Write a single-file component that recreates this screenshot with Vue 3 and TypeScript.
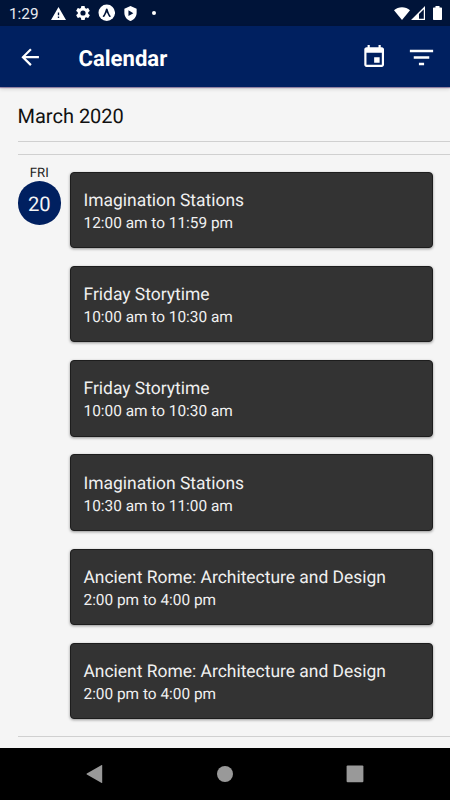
<script setup lang="ts">
interface CalendarEvent {
  title: string
  time: string
}

const events: CalendarEvent[] = [
  { title: 'Imagination Stations', time: '12:00 am to 11:59 pm' },
  { title: 'Friday Storytime', time: '10:00 am to 10:30 am' },
  { title: 'Friday Storytime', time: '10:00 am to 10:30 am' },
  { title: 'Imagination Stations', time: '10:30 am to 11:00 am' },
  { title: 'Ancient Rome: Architecture and Design', time: '2:00 pm to 4:00 pm' },
  { title: 'Ancient Rome: Architecture and Design', time: '2:00 pm to 4:00 pm' },
]
</script>

<template>
  <div class="screen">
    <div class="status">
      <span class="clock">1:29</span>
      <svg class="warn" viewBox="1 2 22 19"><path d="M1 21h22L12 2 1 21zm12-3h-2v-2h2v2zm0-4h-2v-4h2v4z" /></svg>
      <svg class="gear" viewBox="2 2 20 20"><path fill-rule="evenodd" d="M19.4 13a7.5 7.5 0 0 0 0-2l2.1-1.7c.2-.1.3-.4.1-.6l-2-3.5c-.1-.2-.4-.3-.6-.2l-2.5 1a7.300 7.300 0 0 0-1.700-1l-.4-2.600A.5.5 0 0 0 14 2h-4a.5.5 0 0 0-.5.4L9.100 5a7.700 7.700 0 0 0-1.700 1l-2.500-1c-.2-.1-.5 0-.6.2l-2 3.500c-.1.200-.1.500.1.600L4.600 11a7.500 7.500 0 0 0 0 2l-2.200 1.700c-.2.100-.2.400-.1.600l2 3.500c.1.200.4.300.6.200l2.500-1c.5.400 1.100.7 1.700 1l.4 2.600c0 .2.200.4.500.4h4c.3 0 .5-.2.500-.4l.4-2.600c.6-.3 1.200-.6 1.700-1l2.500 1c.2.100.5 0 .6-.2l2-3.500c.1-.2.100-.5-.1-.6zM12 15.700a3.700 3.700 0 1 1 0-7.400 3.700 3.700 0 0 1 0 7.400z" /></svg>
      <svg class="expo" viewBox="0 0 18 18">
        <circle cx="9" cy="9" r="8.500" />
        <path class="cut" d="M4.700 12.700C6.300 10.800 7.200 8.200 8 5.600c.2-.8.500-1.100 1-1.100s.8.300 1 1.100c.8 2.600 1.700 5.200 3.300 7.100-.8.900-1.800.7-2.300-.3L9 8.500l-2 3.900c-.5 1-1.500 1.200-2.300.3z" />
      </svg>
      <svg class="shield" viewBox="3 1 18 22"><path fill-rule="evenodd" d="M12 1 3 5v6c0 5.550 3.840 10.740 9 12 5.160-1.260 9-6.450 9-12V5zM9 7.200v8.600l7.200-4.300z" /></svg>
      <i class="dot"></i>
      <span class="grow"></span>
      <svg class="wifi" viewBox="0 0 16 13"><path d="M8 13 0 3.200C2.200 1.300 5 .2 8 .2s5.800 1.100 8 3z" /></svg>
      <svg class="signal" viewBox="0 0 14 14"><path fill-rule="evenodd" d="M14 0v14H0zM12.800 3.200 8 8v4.700h4.800z" /></svg>
      <svg class="battery" viewBox="0 0 9 14"><path d="M2.500 0h4v1.500H8c.6 0 1 .4 1 1V13c0 .6-.4 1-1 1H1c-.6 0-1-.4-1-1V2.500c0-.6.4-1 1-1h1.500z" /></svg>
    </div>

    <header class="appbar">
      <svg class="back" viewBox="0 0 24 24"><path d="M20 11H7.830l5.590-5.590L12 4l-8 8 8 8 1.410-1.410L7.830 13H20v-2z" /></svg>
      <h1>Calendar</h1>
      <svg class="today" viewBox="0 0 24 24"><path d="M17 12h-5v5h5v-5zM16 1v2H8V1H6v2H5c-1.110 0-1.990.9-1.990 2L3 19c0 1.100.89 2 2 2h14c1.100 0 2-.9 2-2V5c0-1.100-.9-2-2-2h-1V1h-2zm3 18H5V8h14v11z" /></svg>
      <svg class="filter" viewBox="0 0 24 24"><path d="M6 13h12v-2H6M3 6v2h18V6M10 18h4v-2h-4z" /></svg>
    </header>

    <main>
      <h2>March 2020</h2>
      <section class="day">
        <div class="date">
          <span class="weekday">FRI</span>
          <span class="number">20</span>
        </div>
        <div class="events">
          <article v-for="(event, i) in events" :key="i" class="card">
            <div class="title">{{ event.title }}</div>
            <div class="time">{{ event.time }}</div>
          </article>
        </div>
      </section>
    </main>

    <nav>
      <svg viewBox="0 0 18 18"><path d="M16.200.3v17.400c0 .2-.3.300-.5.200L.8 9.500c-.4-.2-.4-.8 0-1L15.700.1c.2-.1.500 0 .5.200z" /></svg>
      <svg viewBox="0 0 18 18"><circle cx="9" cy="9" r="8" /></svg>
      <svg viewBox="0 0 18 18"><rect x=".6" y=".5" width="16.800" height="16.800" rx="1" /></svg>
    </nav>
  </div>
</template>

<style>
body {
  margin: 0;
}
</style>

<style scoped>
.screen {
  width: 450px;
  height: 800px;
  display: flex;
  flex-direction: column;
  overflow: hidden;
  background: #f5f5f5;
  font-family: Roboto, "Liberation Sans", sans-serif;
  text-rendering: geometricPrecision;
}

svg {
  display: block;
  flex: none;
  fill: #fff;
}

.status {
  height: 26px;
  flex: none;
  display: flex;
  align-items: center;
  box-sizing: border-box;
  padding: 0 8px 0 9px;
  background: #001439;
  color: #e8eaf0;
}

.clock {
  width: 41.500px;
  font-size: 15.300px;
  line-height: 26px;
  padding-top: 2px;
}

.warn {
  width: 15px;
  height: 13px;
  margin-right: 10px;
}

.gear {
  width: 14px;
  height: 14px;
  margin-right: 8px;
}

.expo {
  width: 17.500px;
  height: 17.500px;
  margin-right: 9px;
}

.expo .cut {
  fill: #001439;
}

.shield {
  width: 13px;
  height: 15px;
  margin-right: 15px;
}

.dot {
  width: 4px;
  height: 4px;
  border-radius: 50%;
  background: #fff;
}

.grow {
  flex: 1;
}

.wifi {
  width: 16px;
  height: 13px;
  margin-right: 1px;
}

.signal {
  width: 14px;
  height: 14px;
  margin-right: 8px;
}

.battery {
  width: 9px;
  height: 14px;
}

.appbar {
  height: 61px;
  flex: none;
  display: flex;
  align-items: center;
  box-sizing: border-box;
  padding: 1px 13px 0 17.200px;
  background: #002060;
  color: #fff;
  box-shadow: 0 1px 1px rgba(40, 0, 80, 0.4), 0 2px 4px rgba(0, 0, 0, 0.15);
}

.back {
  width: 26.300px;
  height: 26.300px;
}

h1 {
  flex: 1;
  margin: 3px 0 0 35px;
  font-size: 22.100px;
  line-height: 28px;
  font-weight: 700;
}

.today {
  width: 26.300px;
  height: 26.300px;
  margin-right: 19px;
}

.filter {
  width: 31px;
  height: 31px;
}

main {
  flex: 1;
  padding-left: 17.500px;
}

h2 {
  box-sizing: border-box;
  height: 55px;
  margin: 0 0 12px;
  padding-top: 16px;
  border-bottom: 1px solid #d0d0d0;
  color: #111;
  font-size: 20px;
  line-height: 26px;
  font-weight: 400;
}

.day {
  box-sizing: border-box;
  height: 583px;
  display: flex;
  gap: 8.800px;
  border-top: 1px solid #d0d0d0;
  border-bottom: 1px solid #d0d0d0;
}

.date {
  width: 43.700px;
  padding-top: 10px;
  display: flex;
  flex-direction: column;
  align-items: center;
}

.weekday {
  height: 16px;
  font-size: 13.200px;
  line-height: 18px;
  color: #222;
}

.number {
  width: 43.700px;
  height: 43.700px;
  border-radius: 50%;
  background: #002060;
  color: #f4f4f4;
  font-size: 20.200px;
  line-height: 46px;
  text-align: center;
}

.events {
  flex: 1;
  padding: 17px 17.500px 0 0;
  display: flex;
  flex-direction: column;
  gap: 17.800px;
}

.card {
  box-sizing: border-box;
  height: 76.350px;
  padding: 17.200px 12.500px 0;
  border: 1px solid #1d1d1d;
  border-radius: 4px;
  background: #333;
  color: #f0f0f0;
  box-shadow: 0 1px 3px rgba(0, 0, 0, 0.4);
}

.title {
  font-size: 17.450px;
  line-height: 23px;
}

.time {
  margin-top: -1px;
  font-size: 15.400px;
  line-height: 22px;
}

nav {
  height: 52px;
  flex: none;
  display: flex;
  justify-content: center;
  align-items: center;
  gap: 112px;
  background: #000;
}

nav svg {
  width: 18px;
  height: 18px;
  fill: #999;
}
</style>
